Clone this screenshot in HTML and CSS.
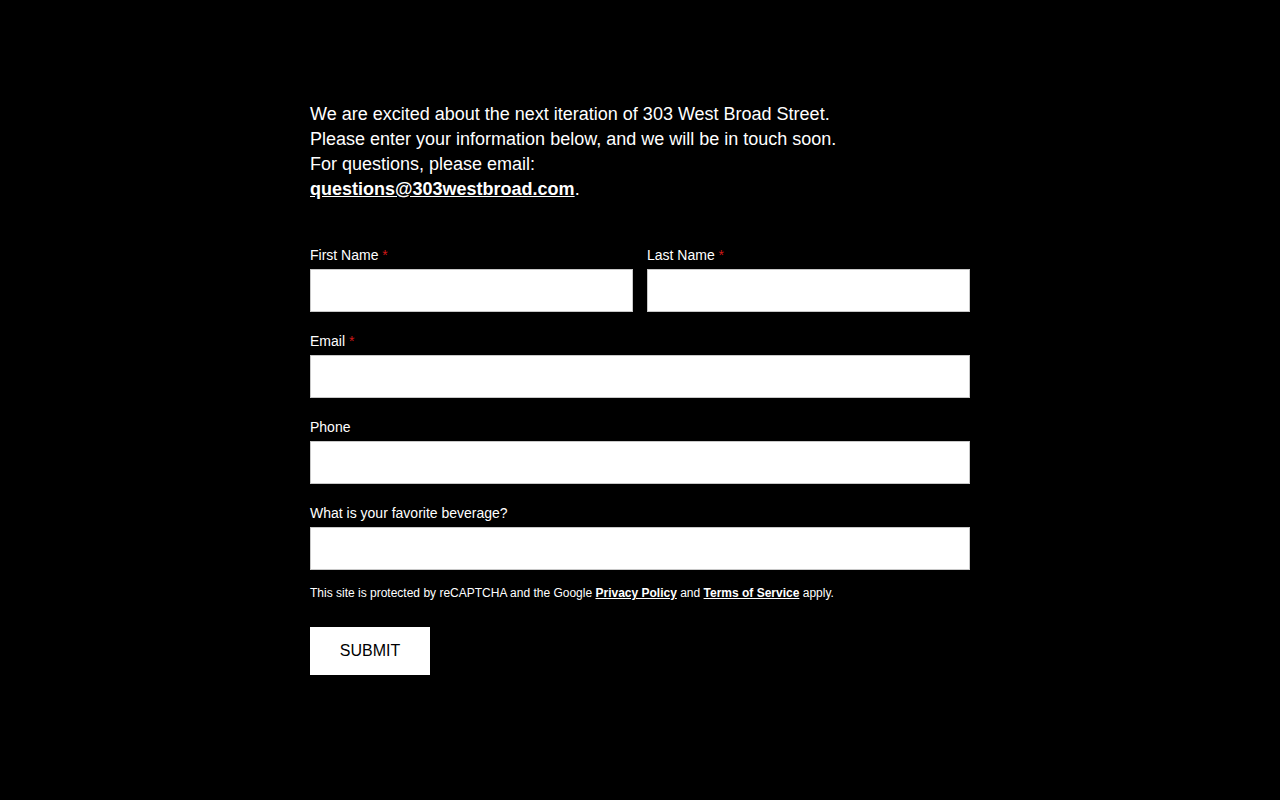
FILE: index.html
```html
<!DOCTYPE html>
<html lang="en">
<head>
<meta charset="utf-8">
<title>303 West Broad</title>
<link rel="stylesheet" href="styles.css">
</head>
<body>
<main class="wrap">
  <div class="intro">
    <p>We are excited about the next iteration of 303 West Broad Street.<br>
    Please enter your information below, and we will be in touch soon.<br>
    For questions, please email:<br>
    <a href="#" class="mail">questions@303westbroad.com</a>.</p>
  </div>
  <form class="form">
    <div class="row">
      <div class="field">
        <label>First Name <span class="req">*</span></label>
        <input type="text">
      </div>
      <div class="field">
        <label>Last Name <span class="req">*</span></label>
        <input type="text">
      </div>
    </div>
    <div class="field">
      <label>Email <span class="req">*</span></label>
      <input type="text">
    </div>
    <div class="field">
      <label>Phone</label>
      <input type="text">
    </div>
    <div class="field">
      <label>What is your favorite beverage?</label>
      <input type="text">
    </div>
    <p class="captcha">This site is protected by reCAPTCHA and the Google <a href="#">Privacy Policy</a> and <a href="#">Terms of Service</a> apply.</p>
    <button type="button" class="submit">SUBMIT</button>
  </form>
</main>
</body>
</html>
```
FILE: styles.css
```css
html, body {
  margin: 0;
  padding: 0;
  background: #000;
  color: #fff;
  font-family: "Liberation Sans", Arial, sans-serif;
}
.wrap {
  width: 660px;
  margin: 0 auto;
  padding-top: 102px;
}
.intro p {
  margin: 0;
  font-size: 18px;
  line-height: 25px;
}
.mail {
  color: #fff;
  font-weight: bold;
  text-decoration: underline;
}
.form {
  margin-top: 44px;
}
.row {
  display: flex;
  gap: 14px;
}
.row .field {
  flex: 1;
}
.field {
  display: flex;
  flex-direction: column;
  margin-bottom: 20px;
}
.field label {
  font-size: 14px;
  line-height: 18px;
  margin-bottom: 5px;
}
.req {
  color: #d01818;
}
.field input {
  box-sizing: border-box;
  height: 43px;
  margin: 0;
  border: 1px solid #c8c8c8;
  background: #fff;
  padding: 0 10px;
  font-family: inherit;
  font-size: 14px;
  width: 100%;
}
.captcha {
  margin: -4px 0 0;
  font-size: 12px;
  line-height: 15px;
}
.captcha a {
  color: #fff;
  font-weight: bold;
  text-decoration: underline;
}
.submit {
  margin-top: 26px;
  width: 120px;
  height: 48px;
  border: none;
  background: #fff;
  color: #000;
  font-family: inherit;
  font-size: 16px;
  padding: 0;
  cursor: pointer;
}
```
